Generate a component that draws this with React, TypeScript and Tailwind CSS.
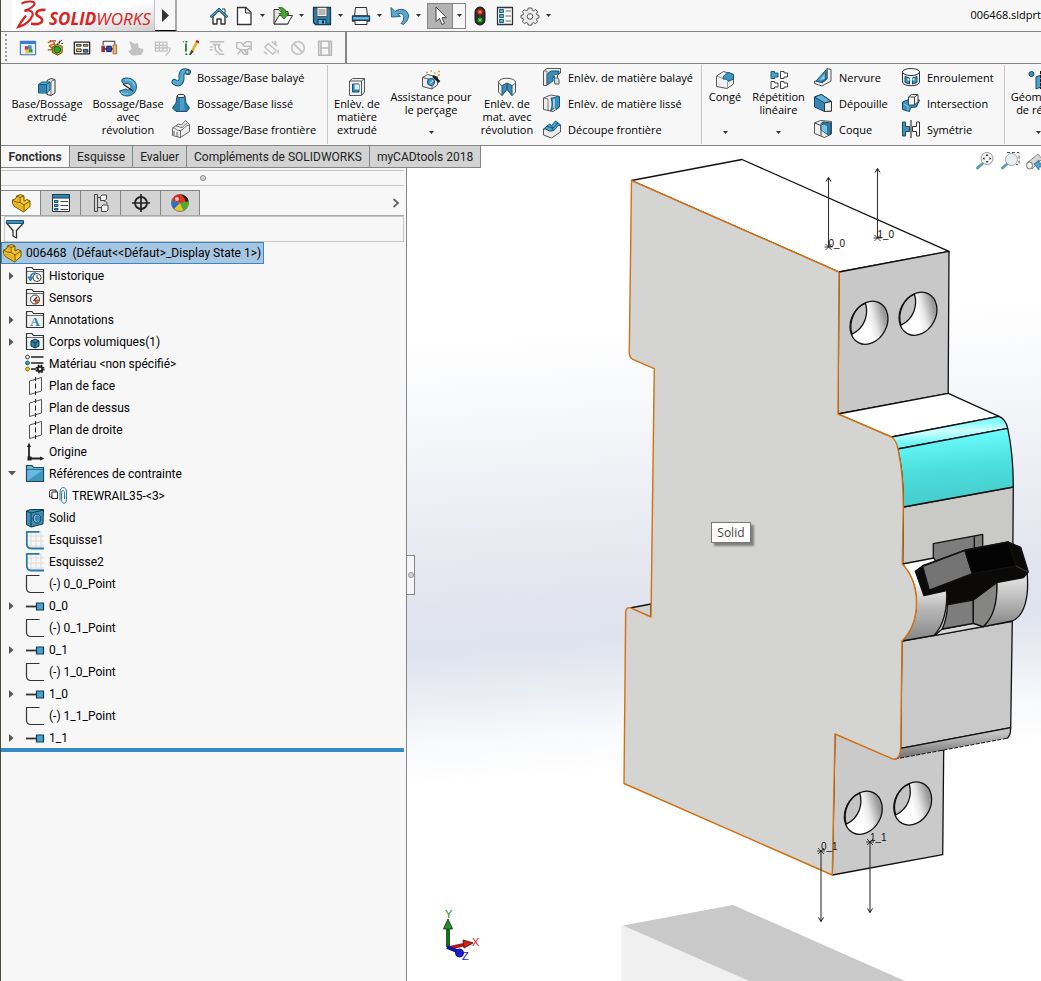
import type { ReactNode } from "react";

type IconProps = { size?: number; children: ReactNode };

function Svg({ size = 20, children }: IconProps) {
  return (
    <svg
      width={size}
      height={size}
      viewBox="0 0 20 20"
      fill="none"
      stroke="#333"
      strokeWidth="1"
      strokeLinejoin="round"
      className="shrink-0"
      aria-hidden="true"
    >
      {children}
    </svg>
  );
}

const icons = {
  home: (
    <Svg>
      <path d="M4 10v8h4v-5h4v5h4v-8L10 4z" fill="#fff" strokeWidth="1.4" />
      <path d="M13 3h3v5" fill="#fff" />
      <path d="M1 10.500 10 2l9 8.500-1.500 1L10 4.800 2.500 11.500z" fill="#4fa3cb" stroke="#14506f" />
    </Svg>
  ),
  page: (
    <Svg>
      <path d="M3.500 1.500h8.500l5 5v12H3.500z" fill="#fff" strokeWidth="1.300" />
      <path d="M11.500 2v5h5" fill="#e4e4e4" />
    </Svg>
  ),
  open: (
    <Svg>
      <path d="M1 3.500h5l1.500 2H15V18H1z" fill="#e3e3e3" />
      <path d="M1 18 6 9.500h13.500L14.500 18z" fill="#f7f7f7" />
      <path d="M5.500 1.500c5-.5 8 2 7.500 6h3l-5 5.500-5-5.500h3c0-2-1-4-3.500-6z" fill="#4aa52f" stroke="#1d6b12" strokeWidth=".8" />
    </Svg>
  ),
  save: (
    <Svg>
      <path d="M1.500 1.500h17v17H3.500l-2-2z" fill="#2f7ea6" stroke="#173a4f" strokeWidth="1.300" />
      <path d="M5 1.500h10v9H5z" fill="#f4f4f4" stroke="#555" />
      <path d="M6.500 4h7M6.500 6h7M6.500 8h7" stroke="#777" />
      <path d="M6 13.500h8v5H6z" fill="#5fb1d6" stroke="#173a4f" />
      <path d="M11 14.500v3" stroke="#102c3c" strokeWidth="2" />
    </Svg>
  ),
  print: (
    <Svg>
      <path d="M4.500 1.500h11L16.500 10h-13z" fill="#f4f4f4" />
      <path d="M1.500 10h17v5h-17z" fill="#2f8dbb" stroke="#173a4f" strokeWidth="1.300" />
      <path d="M2 12h16" stroke="#a8dcf2" />
      <path d="M4 14.500h12v4H4z" fill="#fff" />
    </Svg>
  ),
  undo: (
    <Svg>
      <path d="M1 1.500 1.500 11l9-.5-3-2.500c4-1.500 7 1 6 5-.3 1.500-1 3-2.500 4.500l2.500 1c3-2.500 5-5.500 5-8.500 0-6-7.500-9-13.500-4.500z" fill="#5ba7cf" stroke="#256587" />
    </Svg>
  ),
  cursor: (
    <Svg>
      <path d="M6 1v14.500l3.500-3 2.500 6 2.500-1.200-2.500-5.600h4.500z" fill="#fafafa" stroke="#444" />
    </Svg>
  ),
  lights: (
    <Svg>
      <rect x="5" y="1" width="10" height="18" rx="5" fill="#2c2c2c" stroke="#1b1b1b" />
      <circle cx="10" cy="6" r="3" fill="#e03a22" stroke="#8d1c0e" />
      <circle cx="10" cy="6" r="1" fill="#ff9e85" stroke="none" />
      <circle cx="10" cy="14" r="3" fill="#2b9a27" stroke="#115410" />
      <circle cx="10" cy="14" r="1" fill="#8fe384" stroke="none" />
    </Svg>
  ),
  options: (
    <Svg>
      <path d="M2.500 1.500h15v17h-15z" fill="#fdfdfd" strokeWidth="1.300" />
      <path d="M4.500 3.500h4v3h-4zM4.500 8.500h4v3h-4zM4.500 13.500h4v3h-4z" fill="#57b0da" stroke="#1b668c" />
      <path d="M10.500 5h5.500M10.500 10h5.500M10.500 15h5.500" stroke="#666" />
    </Svg>
  ),
  gear: (
    <Svg>
      <path
        d="M8.200 2h3.600l.5 2.200 1.300.6 2-1.200 2 2-1.200 2 .6 1.300 2 .5v2.400l-2 .6-.6 1.300 1.200 2-2 2-2-1.200-1.300.6-.5 2H8.200l-.5-2-1.300-.6-2 1.200-2-2 1.200-2-.6-1.300-2-.6V9.400l2-.5.6-1.300-1.200-2 2-2 2 1.200 1.300-.6z"
        fill="#ebebeb"
        stroke="#555"
      />
      <circle cx="10" cy="10.500" r="2.800" fill="#f7f7f7" stroke="#555" />
    </Svg>
  ),
  extrude: (
    <Svg>
      <path d="M10 3.500 14 1.500l4 1V16l-4 2.500-4-1z" fill="#f4f4f4" />
      <path d="M14 4.500 18 2.500M14 4.500v13.500" stroke="#666" />
      <path d="M1.500 7.500 5 5h8v8l-3.500 3h-8z" fill="#58acd4" stroke="#1a5675" />
      <path d="M1.500 7.500h8V16M9.500 7.500 13 5" stroke="#1a5675" />
      <path d="M2 8h7v7.500H2z" fill="#3287b2" stroke="none" />
    </Svg>
  ),
  revolve: (
    <Svg>
      <path d="M5 1.500c8-2 13.500 2.500 13.500 8 0 5.500-4.500 9.500-9.500 9.500-3.500 0-6.500-2-7.500-5l6.500-2c1.500 1.500 3.500 1 4.500-.5 1.500-2.500-.5-5-3.500-5-2.500.5-4.500 0-5-1.500-.4-1.500 0-3 1-3.500z" fill="#4ba1cb" stroke="#1a5675" />
      <path d="M7 3c5-1 9 1.500 9.500 6" stroke="#9ad5ef" />
      <path d="M3 15.500c2 1.500 4.500 2 7 1" stroke="#9ad5ef" />
      <path d="m5 7 10 7" stroke="#222" strokeWidth="1.300" />
    </Svg>
  ),
  sweep: (
    <Svg>
      <path d="M3.500 15c5 3.500 7.500-.5 7-5-.5-5 2-7 6.500-5" stroke="#1a5675" strokeWidth="6" strokeLinecap="round" />
      <path d="M3.500 15c5 3.500 7.500-.5 7-5-.5-5 2-7 6.500-5" stroke="#52a9d2" strokeWidth="4" strokeLinecap="round" />
      <circle cx="16.500" cy="5" r="1.800" fill="#8fd0ec" stroke="#1a5675" />
    </Svg>
  ),
  loft: (
    <Svg>
      <path d="M6 3h8l1 7 3.500 5-2.500 3.500H5L1.500 15 5 10z" fill="#2f7ea8" stroke="#1a5675" />
      <path d="M9 4v14l5-1-1-7V4z" fill="#4a9fc8" stroke="none" />
      <ellipse cx="10" cy="3" rx="4" ry="1.600" fill="#fff" />
    </Svg>
  ),
  boundary: (
    <Svg>
      <path d="m1.500 9 6-4 3 1 4-4.500 4 4v7l-9 6-8-2z" fill="#efefef" stroke="#666" />
      <path d="M1.500 9c3-1 3 3 8 2.500 4-1 4-5 9-5.500M9.500 11.500v7M5 7c3 0 4 2 6 1.500s3-4 5-4M3 12v4M6 13v4" stroke="#666" />
    </Svg>
  ),
  cutExtrude: (
    <Svg>
      <path d="m2.500 4 3-2.500h12V15l-3 3.500h-12z" fill="#f1f1f1" stroke="#555" />
      <path d="M2.500 4h12v14.500M14.500 4l3-2.500" stroke="#555" />
      <path d="M5.500 7h6.500v8H5.500z" fill="#2f86b1" stroke="#1a5675" />
      <path d="M7.500 7.500H12v5H7.500z" fill="#d9eff9" stroke="none" />
    </Svg>
  ),
  wizard: (
    <Svg>
      <path d="m1.500 7.500 5-3 10 2.500v8L11 19l-9.500-2.500z" fill="#ececec" stroke="#555" />
      <path d="M1.500 7.500 11 10v9M11 10l5.500-3" stroke="#555" />
      <circle cx="10" cy="12" r="3.600" fill="#429aca" stroke="#1a4f6b" />
      <path d="M9 13c2 0 2.500-1 2.500-3" stroke="#d2edf9" />
      <path d="m12 6 6.500 6" stroke="#1d1d1d" strokeWidth="2.400" />
      <path d="M5 2.500h2M9.500 1h1.500M13 3h1.500M17 1.500h2M17 5h2" stroke="#f0961e" strokeWidth="1.600" />
    </Svg>
  ),
  cutRevolve: (
    <Svg>
      <path d="M1.500 5v10l3.500 3.500 5-7 5 7 3.500-3.500V5z" fill="#ededed" stroke="#555" />
      <path d="M5 8.500 10 6l5 2.500v10l-5-6-5 6z" fill="#3790bd" stroke="#1a5675" />
      <path d="M10 6.500v6" stroke="#15445c" />
      <path d="M1.500 5c1-5 16-5 17 0-.5 2-2 3-3.500 3.500L10 6 5 8.500C3.500 8 2 7 1.500 5z" fill="#f8f8f8" stroke="#555" />
    </Svg>
  ),
  cutSweep: (
    <Svg>
      <path d="M1.500 4 5 1.500h13.500V6l-3 2v7h-3V9L5 18.500H1.500z" fill="#ededed" stroke="#555" />
      <path d="M5 18V9c0-3 3-5 6-5h6v3c-4 0-6 1-6 4v3z" fill="#378fbd" stroke="#1a5675" />
      <path d="M12 12c2-2 5-1 5 1v4h-4z" fill="#c9e6f3" stroke="#555" />
      <path d="M1.500 4h3.500v14" stroke="#777" />
    </Svg>
  ),
  cutLoft: (
    <Svg>
      <path d="m1.500 5 7-3 9 1.500V14l-6.500 4.500-9.500-2z" fill="#ededed" stroke="#555" />
      <path d="M1.500 5 6 6v11.500" stroke="#777" />
      <path d="M9 5c3 0 6-1 6-2l2.500 1v10l-3 2.500c-1-4-3 0-6 1.500 2-4 2-9 .5-13z" fill="#378fbd" stroke="#1a5675" />
      <path d="M12 6v9" stroke="#b7e0f2" strokeWidth="1.500" />
    </Svg>
  ),
  cutBoundary: (
    <Svg>
      <path d="M1.500 10v6l8 3 9-6V6z" fill="#ececec" stroke="#555" />
      <path d="m1.500 10 6-5 2 1.500 4-4.500 5 4c-4 0-4 5-8.500 6-4 1-5-3-8.500-2z" fill="#4aa3ce" stroke="#1a5675" />
      <path d="M5 7.500c3 0 4 2 6 1.500s2-3.500 5-5M9.500 6.500l2 5.500" stroke="#1a5675" />
    </Svg>
  ),
  fillet: (
    <Svg>
      <path d="m1.500 6 7-4.500 10 3V14L12 18.500l-10.500-2z" fill="#f0f0f0" stroke="#555" />
      <path d="M8 9c0-3 2-5 6-6.500l4.500 2V9L13 11.500c0-2-2-2.500-5-2.500z" fill="#3c96c3" stroke="#1a5675" />
      <path d="M1.500 6 8 8.500M12.500 12v6" stroke="#999" />
    </Svg>
  ),
  pattern: (
    <Svg>
      <path d="M2 1.500v7h3.500V7H9V3H5.500V1.500z" fill="#4aa3ce" stroke="#1a5675" />
      <path d="M11.500 1.500v7H15V7h3.500V3H15V1.500zM2 11.500v7h3.500V17H9v-4H5.500v-1.500zM11.500 11.500v7H15V17h3.500v-4H15v-1.500z" fill="#fff" stroke="#444" />
    </Svg>
  ),
  rib: (
    <Svg>
      <path d="m14 1.500 4 1V14l-9 5-7.500-2.500V14l8 1 4.500-3z" fill="#ededed" stroke="#555" />
      <path d="M14 1.500V12l-5 4" stroke="#555" />
      <path d="M3 14 13 3v9l-5 3.500z" fill="#3b94c1" stroke="#1a5675" />
      <path d="m6.500 13 5-6v5z" fill="#8ccbe8" stroke="none" />
    </Svg>
  ),
  draft: (
    <Svg>
      <path d="m1.500 4 7-2.500 10 7V18l-7 .5-10-4.500z" fill="#3586b0" stroke="#1a4a63" />
      <path d="m1.500 4 7-2.500 10 7-7 1.500z" fill="#63b4da" stroke="#1a4a63" />
      <path d="m11.500 10 7-1.500V18l-7 .5z" fill="#eee" />
    </Svg>
  ),
  shell: (
    <Svg>
      <path d="m1.500 4 6-2.500 11 1V15l-7 3.500-10-4z" fill="#f0f0f0" stroke="#555" />
      <path d="m8 4.500 2-1.500 8 1v10l-2.500 2-7.500-5z" fill="#2b7ca7" stroke="#1a4a63" />
      <path d="M8 4.500 14 7v7.500l-6-3.500z" fill="#7cc3e3" stroke="none" />
      <path d="m1.500 4 6.500 2.500v10.500M8 6.500l3-2" stroke="#444" />
    </Svg>
  ),
  wrap: (
    <Svg>
      <path d="M1.500 5v10c0 5 17 5 17 0V5z" fill="#f0f0f0" />
      <ellipse cx="10" cy="5" rx="8.500" ry="3.500" fill="#fafafa" />
      <path d="M4 9.500 8.500 11v6L4 15.500zM16 9.500 11.500 11v6l4.500-1.500z" fill="#3b94c1" stroke="#1a4a63" />
      <path d="M6.500 12.500h2M11.500 12.500h2" stroke="#e6f5fb" strokeWidth="2" />
    </Svg>
  ),
  intersect: (
    <Svg>
      <path d="M1.500 9 6 7h12.500l-3 7-6 .5-1 4-7-2z" fill="#3b94c1" stroke="#1a4a63" />
      <path d="m7.500 4 3-2.500h6.500v7L13.500 12h-6z" fill="#f4f4f4" stroke="#444" />
      <path d="M7.500 4h6v8M13.500 4 17 1.500" stroke="#444" />
      <path d="m3 11 4 2.500v4" stroke="#8ccbe8" />
    </Svg>
  ),
  mirror: (
    <Svg>
      <path d="M1.500 3h3v4.500h4v5h-4V17h-3z" fill="#3b94c1" stroke="#1a4a63" />
      <path d="M18.500 3h-3v4.500h-4v5h4V17h3z" fill="#fff" />
      <path d="M10 1v18" stroke="#111" />
    </Svg>
  ),
  refGeometry: (
    <Svg>
      <circle cx="3.500" cy="4" r="2.500" fill="#3b94c1" stroke="#1a4a63" />
      <path d="m8 7 9-3.500v12L8 19z" fill="#4aa3ce" stroke="#1a4a63" />
      <path d="M12.500 1v18" stroke="#111" strokeDasharray="3 1" />
    </Svg>
  ),
  part: (
    <Svg>
      <path d="M1.500 7 5 5.500 5.500 3l4-1.500L13 3v5l3-1.500 3 1.500v5.500L12.500 19l-9-5.500-2-3z" fill="#f4c632" stroke="#7a5600" />
      <path d="M5.500 3 9 4.500 13 3M9 4.500v5l4 2.500 6-4M13 12v6.500M1.500 7l3.500 2 4 .5" stroke="#7a5600" />
      <path d="m6 3.500 3 1.500v4L6 8zM2 8l10.500 5.500v4.500L4 13z" fill="#e0a612" stroke="none" opacity=".6" />
    </Svg>
  ),
  properties: (
    <Svg>
      <path d="M1.500 1.500h17v17h-17z" fill="#fafafa" />
      <path d="M1.500 1.500h17v3.500h-17z" fill="#2f86b1" stroke="#173f55" />
      <path d="M3.500 7.500h3.500v2H3.500zM3.500 11.500h3.500v2H3.500zM3.500 15.500h3.500v1.500H3.500z" fill="#4aa3ce" stroke="#1a5675" />
      <path d="M9.500 8.500H17M9.500 12.500H17M9.500 16.500H17" stroke="#444" />
    </Svg>
  ),
  configs: (
    <Svg>
      <path d="M3.500 1.500h3v17h-3zM6.500 4.500h5M6.500 14.500h5" stroke="#444" />
      <path d="M9.500 3.500 11 2h4.500v4L14 7.500H9.500z" fill="#f1f1f1" stroke="#444" />
      <path d="m10.500 13.500 1.500-1.500h5v5l-1.500 1.500h-5z" fill="#f1f1f1" stroke="#444" />
      <path d="M13 8c2 0 3 1 3 3" stroke="#444" />
    </Svg>
  ),
  target: (
    <Svg>
      <circle cx="10" cy="10" r="6" stroke="#222" strokeWidth="1.800" />
      <path d="M10 1v18M1 10h18" stroke="#222" strokeWidth="1.700" />
    </Svg>
  ),
  ball: (
    <Svg>
      <circle cx="10" cy="10" r="8.500" fill="#e9c720" stroke="#777" />
      <path d="M10 10 2 7.500C3.500 3 7 1.500 10 1.500z" fill="#d52b1e" stroke="none" />
      <path d="M10 10V1.500c4.500 0 8 3 8.500 7z" fill="#202020" stroke="none" />
      <path d="M10 1.500c3 1 5 4 6 7.500l-6 1z" fill="#e33425" stroke="none" />
      <path d="M11 2c3 1 5 4 5 7l2-1c0-3-3-6-7-6z" fill="#202020" stroke="none" />
      <path d="M10 10 2 7.500c-1 3 0 6.500 2 8.500z" fill="#2c6fc7" stroke="none" />
      <path d="m10 10 8.500-1.500c0 4-1.500 7.500-5 9.500z" fill="#4bab33" stroke="none" />
      <circle cx="7" cy="6" r="2" fill="#fff" opacity=".7" stroke="none" />
    </Svg>
  ),
  filter: (
    <Svg>
      <path d="M1.500 4 8 11.500V17l3.500 2v-7.500L18.500 4z" fill="#f8f8f8" strokeWidth="1.300" />
      <path d="M1.500 1.500h17v2.800h-17z" fill="#3c96c3" stroke="#1a5675" />
    </Svg>
  ),
};

function Folder({ children, fill = "#f1f1f1", stroke = "#333" }: { children?: ReactNode; fill?: string; stroke?: string }) {
  return (
    <Svg>
      <path d="M1.500 17.500v-16H7L8.500 3.500h10v14z" fill={fill} stroke={stroke} strokeWidth="1.200" />
      <path d="M1.500 5.500h17" stroke={stroke} strokeWidth=".7" />
      {children}
    </Svg>
  );
}

const plane = (
  <Svg>
    <path d="m4.500 5 12-3.500V15l-12 3.500z" stroke="#555" />
    <path d="M10.500 1v4M10.500 7.500v5M10.500 15v4" stroke="#222" />
  </Svg>
);

const sketch = (
  <Svg>
    <path d="M6 1v17M11 1v17M16 1v17M2 6h17M2 11h17M2 16h17" stroke="#dcdcdc" />
    <path d="M14.500 1.800H1.800V14c0 3 2 4.500 4.500 4.500H19" stroke="#2a7ba6" strokeWidth="1.800" />
  </Svg>
);

const sketchPoint = (
  <Svg>
    <path d="M14.500 1.500h-13V14c0 3 2 4.500 4.500 4.500H19" strokeWidth="1.200" />
  </Svg>
);

const mateAxis = (
  <Svg>
    <path d="M1 10.500h11" strokeWidth="1.800" />
    <path d="M11.500 7h7v7h-7z" fill="#4aa3ce" stroke="#123a4e" strokeWidth="1.200" />
  </Svg>
);

type TreeItem = { label: string; icon: ReactNode; state?: "closed" | "open"; child?: boolean };

const tree: TreeItem[] = [
  {
    label: "Historique",
    state: "closed",
    icon: (
      <Folder>
        <circle cx="12" cy="11.500" r="4" fill="#fff" stroke="#444" />
        <path d="M12 9v3l2 1" />
        <path d="M3 11h5l-2.500 4z" fill="#3c96c3" stroke="#2a7ba6" />
        <path d="M5.500 11c.5-3 3-4 5.500-4" stroke="#2a7ba6" strokeWidth="1.400" />
      </Folder>
    ),
  },
  {
    label: "Sensors",
    icon: (
      <Folder>
        <circle cx="10" cy="11.500" r="4.500" fill="#fff" stroke="#333" />
        <path d="M10 11.500h4c0 2.500-1.500 4-4 4z" fill="#e2491f" stroke="none" />
        <path d="m8.500 13 3.500-4" strokeWidth="1.400" />
      </Folder>
    ),
  },
  {
    label: "Annotations",
    state: "closed",
    icon: (
      <Folder>
        <text x="10" y="16" textAnchor="middle" fontSize="13" fontWeight="700" fontFamily="Liberation Serif, serif" fill="#2a7ba6" stroke="none">
          A
        </text>
      </Folder>
    ),
  },
  {
    label: "Corps volumiques(1)",
    state: "closed",
    icon: (
      <Folder>
        <path d="m6 9 4-2 4 2v5l-4 2-4-2z" fill="#2f86b1" stroke="#123a4e" />
        <path d="m6 9 4 2 4-2M10 11v5" stroke="#123a4e" />
      </Folder>
    ),
  },
  {
    label: "Matériau <non spécifié>",
    icon: (
      <Svg>
        <path d="M6 3h12.500M6 9h12.500M6 15h5" stroke="#222" strokeWidth="1.700" />
        <circle cx="2.500" cy="3" r="1.900" fill="#fff" />
        <circle cx="2.500" cy="9" r="1.900" fill="#4aa3ce" stroke="#1a5675" />
        <circle cx="2.500" cy="15" r="1.900" fill="#f4c632" stroke="#8a6500" />
        <circle cx="15" cy="15" r="2.400" stroke="#222" strokeWidth="2.200" />
        <circle cx="15" cy="15" r="4" stroke="#222" strokeWidth="1.200" strokeDasharray="1.600 1.600" />
      </Svg>
    ),
  },
  { label: "Plan de face", icon: plane },
  { label: "Plan de dessus", icon: plane },
  { label: "Plan de droite", icon: plane },
  {
    label: "Origine",
    icon: (
      <Svg>
        <path d="M4 3v13.500h13" stroke="#222" strokeWidth="1.800" />
        <path d="m4 .5 2 4.500H2zM19.500 16.500 15 14.500v4z" fill="#222" stroke="none" />
        <path d="M2.500 14.500h4v4h-4z" fill="#222" stroke="none" />
      </Svg>
    ),
  },
  {
    label: "Références de contrainte",
    state: "open",
    icon: (
      <Folder fill="#66b9de" stroke="#1a4a63">
        <path d="M2 17 18 6v11z" fill="#4094be" stroke="none" />
      </Folder>
    ),
  },
  {
    label: "TREWRAIL35-<3>",
    child: true,
    icon: (
      <Svg>
        <path d="M1.500 5.500 3 4h5v2h1.500v6.500H4v-1.500H1.500z" fill="#eee" />
        <path d="M4 6h5.500v6.500H4z" fill="#fff" />
        <path d="M12 6c0-6 6.500-6 6.500 0v7.500c0 5-5 5-5 0V6.500c0-2.500 3-2.500 3 0V13" stroke="#2a7ba6" />
        <path d="M12 6v8.500" stroke="#2a7ba6" />
      </Svg>
    ),
  },
  {
    label: "Solid",
    icon: (
      <Svg>
        <path d="m1.500 3 4-1.500h13L18 16l-12 3-4.500-2.500z" fill="#3c8fb9" stroke="#123a4e" />
        <path d="M6 5v14M1.500 3 6 5l12.500-3" stroke="#123a4e" />
        <ellipse cx="12" cy="10.500" rx="3.800" ry="4.500" fill="#7fbfdd" stroke="#123a4e" />
        <ellipse cx="12.500" cy="10.500" rx="2.500" ry="3.300" fill="#3a84aa" stroke="none" />
      </Svg>
    ),
  },
  { label: "Esquisse1", icon: sketch },
  { label: "Esquisse2", icon: sketch },
  { label: "(-) 0_0_Point", icon: sketchPoint },
  { label: "0_0", icon: mateAxis, state: "closed" },
  { label: "(-) 0_1_Point", icon: sketchPoint },
  { label: "0_1", icon: mateAxis, state: "closed" },
  { label: "(-) 1_0_Point", icon: sketchPoint },
  { label: "1_0", icon: mateAxis, state: "closed" },
  { label: "(-) 1_1_Point", icon: sketchPoint },
  { label: "1_1", icon: mateAxis, state: "closed" },
];

function Caret() {
  return (
    <svg width="5" height="3" viewBox="0 0 5 3" aria-hidden="true">
      <path d="M0 0h5L2.500 3z" fill="#333" />
    </svg>
  );
}

function SplitTool({ icon, label }: { icon: ReactNode; label: string }) {
  return (
    <div className="flex items-center">
      <button aria-label={label}>{icon}</button>
      <button aria-label={`${label} menu`} className="flex h-5 w-[17px] items-center justify-center">
        <Caret />
      </button>
    </div>
  );
}

function Logo() {
  return (
    <div className="flex h-full w-[143px] shrink-0 items-start border-r border-[#c4c4c4] bg-linear-to-br from-white from-50% to-[#cfcfcf] pl-1">
      <svg width="33" height="30" viewBox="0 0 33 30" fill="none" stroke="#d9231f" aria-hidden="true">
        <path d="M5.500 3.500C10 1.200 18 .8 18.500 3.200c.5 2.500-4.500 5.800-10 7.600" strokeWidth="2" />
        <path d="M8.500 10.800c5.500-1 9 .4 8 4.400C15 20.500 8.500 25.500 2 27.200c2.500-5 5-8 8-11.700" strokeWidth="2.200" />
        <path d="M29.500 10c-4.500-1-9 .8-9.200 3.600-.2 3 6.400 3.400 5.900 6.800-.4 3-5 4.200-11.200 3.400" strokeWidth="2.600" />
      </svg>
      <span className="flex pt-2 text-[17px] leading-[22px] text-[#d9231f] italic">
        <b>SOLID</b>
        <span>WORKS</span>
      </span>
    </div>
  );
}

function TitleBar() {
  return (
    <header className="flex h-8 items-stretch border-b border-[#858585]">
      <div className="w-[11px] shrink-0" />
      <Logo />
      <button aria-label="Menu" className="flex w-[22px] items-center justify-center border-r-2 border-b border-r-[#aaa] border-b-black">
        <svg width="7" height="13" viewBox="0 0 7 13" aria-hidden="true">
          <path d="M0 0l7 6.500L0 13z" fill="#333" />
        </svg>
      </button>
      <div className="ml-8 flex flex-1 items-center">
        <button aria-label="Accueil" className="mr-[5px]">
          {icons.home}
        </button>
        <div className="flex gap-0.5">
          <SplitTool icon={icons.page} label="Nouveau" />
          <SplitTool icon={icons.open} label="Ouvrir" />
          <SplitTool icon={icons.save} label="Enregistrer" />
          <SplitTool icon={icons.print} label="Imprimer" />
          <SplitTool icon={icons.undo} label="Annuler" />
        </div>
        <div className="flex h-[26px] border border-[#858585]">
          <button aria-label="Sélectionner" className="flex w-[25px] items-center justify-center border-r border-[#858585] bg-[#b3b3b3]">
            {icons.cursor}
          </button>
          <button aria-label="Sélectionner menu" className="flex w-3 items-center justify-center">
            <Caret />
          </button>
        </div>
        <div className="ml-1 flex items-center gap-[5px]">
          <button aria-label="Reconstruire">{icons.lights}</button>
          <button aria-label="Propriétés du fichier">{icons.options}</button>
          <SplitTool icon={icons.gear} label="Options" />
        </div>
      </div>
      <h1 className="self-center text-[11px]">006468.sldprt</h1>
    </header>
  );
}

const macroTools: { label: string; art: ReactNode }[] = [
  {
    label: "Image",
    art: (
      <>
        <path d="M1.500 2.500h17v15h-17z" fill="#e3f1fb" stroke="#2456a8" />
        <path d="M1.500 2.500h17v3h-17z" fill="#3a78d8" stroke="none" />
        <path d="M6.500 8h4v4h-4z" fill="#d33a2a" stroke="none" />
        <path d="M10 7h4v4h-4z" fill="#3f87e0" stroke="none" />
        <path d="M7 12h4v4H7z" fill="#f2c32b" stroke="none" />
        <path d="M11 11h4v4h-4z" fill="#2f9b3c" stroke="none" />
      </>
    ),
  },
  {
    label: "Nouvelle macro",
    art: (
      <>
        <path d="m2 4 6-2 2 5M3 8l7-3M2 12h6l-4-5" stroke="#c26a1a" strokeWidth="1.600" />
        <path d="m7 9 5-3 6 2v7l-5 3-6-3z" fill="#e8b923" stroke="#5a4200" />
        <path d="m9 9 4-1 3 2v4l-4 2-3-2z" fill="#34a32e" stroke="#0d4b0a" />
        <path d="M12 6 18 1M15 2v3M17 5h2" stroke="#222" />
        <path d="M4 2h2M9 2h2" stroke="#e33" strokeWidth="1.600" />
      </>
    ),
  },
  {
    label: "Tableau",
    art: (
      <>
        <path d="M1.500 3.500h17v13h-17z" fill="#fff" stroke="#222" strokeWidth="1.400" />
        <path d="M4 6h5v2H4zM4 11h5v3H4zM11.500 6h5v2h-5z" fill="#f0d25a" stroke="#222" />
        <path d="M11.500 11.500h5v3h-5z" fill="#3d8be0" stroke="#222" />
      </>
    ),
  },
  {
    label: "Liaison",
    art: (
      <>
        <path d="M3.500 7V2.500h13V6" stroke="#222" />
        <path d="M1.500 7.500h4v7h-4z" fill="#a22a3c" stroke="none" />
        <path d="M5 11h10" stroke="#222" strokeWidth="1.500" />
        <path d="M7.500 8h5v6h-5z" fill="#2b4fc4" stroke="#113" />
        <path d="M14.500 6.500h4v10h-4z" fill="#f2b56a" stroke="#a5682a" />
      </>
    ),
  },
  {
    label: "Coupe",
    art: <path d="m3 3 6 3 3-1v5l6 2-2 5-10 1-4-4 4-3z" fill="#c3c3c3" stroke="#bbb" />,
  },
  {
    label: "Grille",
    art: <path d="M1.500 3.500h13v10h-13zM1.500 7h13M1.500 10h13M6 3.500v10M10 3.500v10M12 9l6 1-1 4-4 4" stroke="#c3c3c3" strokeWidth="1.400" />,
  },
  {
    label: "Crayon",
    art: (
      <>
        <path d="M2 3h1M5 3h2M5.500 5v9M5 17h2M9 17h2" stroke="#17721d" strokeWidth="1.800" />
        <path d="m18 3-6 11" stroke="#e3b51f" strokeWidth="3" />
        <path d="m17 2 3 2" stroke="#c2202f" strokeWidth="2.500" />
        <path d="m10.500 17 1-4 2 1z" fill="#222" />
      </>
    ),
  },
  {
    label: "Chanfrein",
    art: <path d="M2 3h16M5 6h9M8 6v6l5 5h5M12 6v4l4 4M2 9h3M2 12h3M9 17v1" stroke="#bdbdbd" strokeWidth="1.700" />,
  },
  {
    label: "Mains",
    art: <path d="M1 4h6l3 4h8M18 3h-5L9 6M2 5v5l5 2h6l4-2M6 12l4 5h4l-4-5M14 17v-5M3 17l3-4M18 3v10" stroke="#bdbdbd" strokeWidth="1.600" />,
  },
  {
    label: "Cotes",
    art: <path d="m3 9 9 8M7 5l9 8M3 9l4-4M12 17l4-4M11 3l6 5M2 14l4 3M14 2l2 3M18 12v4" stroke="#c3c3c3" strokeWidth="1.700" />,
  },
  {
    label: "Interdit",
    art: (
      <>
        <circle cx="10" cy="10" r="7" stroke="#c6c6c6" strokeWidth="2" />
        <path d="m5 5 10 10" stroke="#c6c6c6" strokeWidth="2" />
      </>
    ),
  },
  {
    label: "Film",
    art: <path d="M3 2.500h14v15.500H3zM5.500 10h9M5.500 2.500v15M14.500 2.500v15" stroke="#b8b8b8" strokeWidth="1.800" />,
  },
];

function MacroBar() {
  return (
    <div className="flex h-8 border-b border-[#858585]">
      <div className="flex h-[31px] items-center border-r-2 border-[#858585] pr-[7px]">
        <div className="mr-[7px] ml-1 h-[27px] w-0 border-l-2 border-dotted border-[#999]" />
        {macroTools.map((tool) => (
          <button key={tool.label} aria-label={tool.label} className="flex w-[27px] justify-center">
            <Svg size={18}>{tool.art}</Svg>
          </button>
        ))}
      </div>
    </div>
  );
}

type BigProps = { icon: ReactNode; lines: string[]; width: string; menu?: boolean };

function BigButton({ icon, lines, width, menu }: BigProps) {
  return (
    <button className={`flex shrink-0 flex-col items-center ${menu ? "pt-1.5" : "pt-[13px]"} ${width}`}>
      {icon}
      {lines.map((line) => (
        <span key={line} className="whitespace-nowrap">
          {line}
        </span>
      ))}
      {menu && (
        <span className="mt-auto pb-[11px]">
          <Caret />
        </span>
      )}
    </button>
  );
}

function SmallColumn({ items, width }: { items: [ReactNode, string][]; width: string }) {
  return (
    <div className={`flex shrink-0 flex-col pl-1 ${width}`}>
      {items.map(([icon, label]) => (
        <button key={label} className="flex h-[26px] items-center gap-1.5 whitespace-nowrap">
          {icon}
          {label}
        </button>
      ))}
    </div>
  );
}

function Divider() {
  return <div className="my-px w-px shrink-0 bg-[#c6c6c6]" />;
}

function Ribbon() {
  return (
    <div className="flex h-[82px] overflow-hidden border-b border-[#858585] pl-1 text-[11px] leading-[13px]">
      <BigButton icon={icons.extrude} lines={["Base/Bossage", "extrudé"]} width="w-[84px]" />
      <BigButton icon={icons.revolve} lines={["Bossage/Base", "avec", "révolution"]} width="w-[78px]" />
      <SmallColumn
        width="w-[160px]"
        items={[
          [icons.sweep, "Bossage/Base balayé"],
          [icons.loft, "Bossage/Base lissé"],
          [icons.boundary, "Bossage/Base frontière"],
        ]}
      />
      <Divider />
      <BigButton icon={icons.cutExtrude} lines={["Enlèv. de", "matière", "extrudé"]} width="w-[58px]" />
      <BigButton icon={icons.wizard} lines={["Assistance pour", "le perçage"]} width="w-[90px]" menu />
      <BigButton icon={icons.cutRevolve} lines={["Enlèv. de", "mat. avec", "révolution"]} width="w-[62px]" />
      <SmallColumn
        width="w-[163px]"
        items={[
          [icons.cutSweep, "Enlèv. de matière balayé"],
          [icons.cutLoft, "Enlèv. de matière lissé"],
          [icons.cutBoundary, "Découpe frontière"],
        ]}
      />
      <Divider />
      <BigButton icon={icons.fillet} lines={["Congé"]} width="w-[46px]" menu />
      <BigButton icon={icons.pattern} lines={["Répétition", "linéaire"]} width="w-[61px]" menu />
      <SmallColumn
        width="w-[88px]"
        items={[
          [icons.rib, "Nervure"],
          [icons.draft, "Dépouille"],
          [icons.shell, "Coque"],
        ]}
      />
      <SmallColumn
        width="w-[107px]"
        items={[
          [icons.wrap, "Enroulement"],
          [icons.intersect, "Intersection"],
          [icons.mirror, "Symétrie"],
        ]}
      />
      <Divider />
      <BigButton icon={icons.refGeometry} lines={["Géométrie", "de référ."]} width="w-[66px]" menu />
    </div>
  );
}

const tabs = ["Esquisse", "Evaluer", "Compléments de SOLIDWORKS", "myCADtools 2018"];

function CommandTabs() {
  return (
    <nav className="z-10 col-start-1 row-start-1 flex w-max font-['Roboto',sans-serif] text-[12px]">
      <button className="w-[68px] border-b border-[#858585] font-bold whitespace-nowrap text-[#333]">Fonctions</button>
      {tabs.map((tab, i) => (
        <button
          key={tab}
          className={`border-b border-l border-[#858585] bg-[#d3d3d3] px-[7px] whitespace-nowrap text-[#222] ${i === tabs.length - 1 ? "border-r" : ""}`}
        >
          {tab}
        </button>
      ))}
    </nav>
  );
}

function FeatureTree() {
  const views: [string, ReactNode][] = [
    ["PropertyManager", icons.properties],
    ["ConfigurationManager", icons.configs],
    ["DimXpertManager", icons.target],
    ["DisplayManager", icons.ball],
  ];
  return (
    <aside className="col-start-1 row-start-2 border-r border-[#858585] bg-[#f7f7f7] pt-0.5 pr-0.5">
      <div className="flex h-4 items-center justify-center border-y border-[#c6c6c6]">
        <span className="size-1.5 rounded-full border border-[#888] bg-[#d5d5d5]" />
      </div>
      <div className="mt-1 flex h-[26px] border-b border-[#a8a8a8]">
        <button aria-label="FeatureManager" className="flex w-[39px] items-center justify-center border-t border-[#858585]">
          {icons.part}
        </button>
        {views.map(([label, icon], i) => (
          <button
            key={label}
            aria-label={label}
            className={`flex w-10 items-center justify-center border-t border-l border-[#858585] bg-[#d3d3d3] ${i === 3 ? "border-r" : ""}`}
          >
            {icon}
          </button>
        ))}
        <button aria-label="Suite" className="ml-auto pr-1">
          <svg width="8" height="10" viewBox="0 0 8 10" fill="none" aria-hidden="true">
            <path d="M1.500 1 6 5 1.500 9" stroke="#666" strokeWidth="1.800" />
          </svg>
        </button>
      </div>
      <label className="ml-[3px] flex h-[26px] items-center border border-[#c6c6c6]">
        {icons.filter}
        <input aria-label="Filtrer l'arbre" className="ml-1 min-w-0 flex-1 bg-transparent text-[12px] outline-none" />
      </label>
      <ul className="border-b-4 border-[#368bc4] font-['Roboto',sans-serif] text-[12px]">
        <li className="flex h-[22px]">
          <button className="flex items-center gap-1 border border-[#3a86bd] bg-[#a6c6e1] pr-0.5 whitespace-pre">
            {icons.part}
            {"006468  (Défaut<<Défaut>_Display State 1>)"}
          </button>
        </li>
        {tree.map((item) => (
          <li key={item.label} className={`flex h-[22px] items-center pt-px ${item.child ? "pl-[23px]" : ""}`}>
            <span className="flex w-6 shrink-0 pl-2">
              {item.state === "closed" && (
                <svg width="5" height="8" viewBox="0 0 5 8" aria-hidden="true">
                  <path d="M0 0l4.500 4L0 8z" fill="#555" />
                </svg>
              )}
              {item.state === "open" && (
                <svg width="8" height="5" viewBox="0 0 8 5" className="-ml-px" aria-hidden="true">
                  <path d="M0 0h8L4 4.500z" fill="#555" />
                </svg>
              )}
            </span>
            <button className="flex items-center gap-1 whitespace-nowrap">
              {item.icon}
              {item.label}
            </button>
          </li>
        ))}
      </ul>
    </aside>
  );
}

function Hole({ x, y }: { x: number; y: number }) {
  return (
    <g transform={`translate(${x} ${y})`} strokeWidth="1.300">
      <ellipse rx="22.500" ry="17.800" transform="rotate(-62)" fill="url(#bore)" stroke="none" />
      <path d="M-3.500-19.500c3 11 0 24-13.500 31C-21-1-14.500-15-3.500-19.500z" fill="#c4c4c4" />
      <ellipse rx="22.500" ry="17.800" transform="rotate(-62)" />
    </g>
  );
}

type MarkerProps = { x: number; y: number; tip: number; label: string; labelY: number };

function Marker({ x, y, tip, label, labelY }: MarkerProps) {
  const back = tip < y ? tip + 4 : tip - 4;
  return (
    <g strokeWidth="1">
      <path d={`M${x} ${y}V${tip}`} stroke="#333" strokeWidth="1.100" />
      <path d={`M${x - 2.500} ${back}L${x} ${tip}L${x + 2.500} ${back}`} />
      <path d={`M${x - 4} ${y}h8M${x - 3} ${y - 3}l6 6M${x + 3} ${y - 3}l-6 6`} strokeWidth=".8" />
      <text x={x} y={labelY} fontSize="10" fontFamily="Liberation Sans, sans-serif" fill="#111" stroke="none">
        {label}
      </text>
    </g>
  );
}

function Model() {
  return (
    <svg viewBox="407 146 634 835" className="block h-full w-full" fill="none" stroke="#111" strokeWidth="1.300" strokeLinejoin="round" role="img" aria-label="006468">
      <defs>
        <linearGradient id="bore" x1="1" y1=".7" x2=".3" y2=".1">
          <stop offset=".1" stopColor="#999" />
          <stop offset=".4" stopColor="#e8e8e8" />
          <stop offset=".6" stopColor="#fff" />
        </linearGradient>
        <linearGradient id="cyan" x1="0" y1="0" x2=".12" y2="1">
          <stop offset=".1" stopColor="#6bfdfd" />
          <stop offset=".55" stopColor="#4ddede" />
          <stop offset="1" stopColor="#46cbcb" />
        </linearGradient>
        <linearGradient id="cyanTop" x1="0" y1="0" x2=".1" y2="1">
          <stop offset=".25" stopColor="#84fbfb" />
          <stop offset=".5" stopColor="#cfffff" />
          <stop offset=".85" stopColor="#6cf6f8" />
        </linearGradient>
        <linearGradient id="drum" x1="0" y1="0" x2="0" y2="1">
          <stop offset=".25" stopColor="#fff" />
          <stop offset=".6" stopColor="#b9b9b9" />
          <stop offset="1" stopColor="#858585" />
        </linearGradient>
        <linearGradient id="drumRight" x1="0" y1="0" x2="0" y2="1">
          <stop offset="0" stopColor="#e9e9e9" />
          <stop offset=".5" stopColor="#b9b9b9" />
          <stop offset="1" stopColor="#858585" />
        </linearGradient>
        <linearGradient id="roll" x1="0" y1="0" x2=".15" y2="1">
          <stop offset=".3" stopColor="#c4c4c4" />
          <stop offset=".9" stopColor="#777" />
        </linearGradient>
      </defs>

      {/* ground shadow */}
      <g stroke="none">
        <path d="M621.500 925.500h2L749 981H621.500z" fill="#f0f0f0" />
        <path d="M623 925.500 733 905 905 981H749z" fill="#c9c9c9" />
      </g>

      {/* housing */}
      <path d="M631.500 180.500 742 159.500 949 251.300 839 272z" fill="#fff" />
      <path d="m839 272 110-20.700-.8 142L838 414z" fill="#c8c8c8" />
      <path d="m838 414 110.200-20.700L999 416.300 891.500 437z" fill="#fff" />
      <path d="m835 734 108.700 16.700-1 104L832.300 875z" fill="#cacaca" />
      <path d="m903.300 507 110-20-1 134.300L902 641z" fill="#c9c9c8" />
      <path d="m902 641 110.300-19.700-1.600 106.400-110 20.600z" fill="#c9c9c9" />
      <path d="m900.700 748.300 110-20.600c0 5.300-1.500 9.500-4 10.600l-113 21z" fill="url(#roll)" stroke="none" />
      <path d="m900.700 748.300 110-20.600c0 5.300-1.500 9.500-4 10.600" />
      <path d="m1006.700 738.300-113 21" strokeDasharray="4 1.500" strokeWidth="1" />
      <path d="M891.500 437 999 416.300c5 2 7.500 6 8.700 12L897.700 449z" fill="url(#cyanTop)" />
      <path d="m897.700 449 110-20.700c4 18 5.600 38 5.600 58.700l-110 20c.3-22-1.500-42-5.600-58z" fill="url(#cyan)" />
      <path d="m630 608 21-4v13z" fill="#d0d0d0" />

      {/* switch recess */}
      <path d="m933.300 543.700 49.400-9.400v30l-49.400 8z" fill="#7d7d7d" />
      <path d="M974.300 536v20" />
      <path d="M902.300 564 934 558l12.500 30c1.500 20-3 38-12.500 47.500L902 641c18-20 20-54 .3-77z" fill="url(#drum)" />
      <path d="m996.700 582 30.500-8c2 24-3 42-15 47l-29 5.700c11-12 14-27 13.500-44.700z" fill="url(#drumRight)" />
      <path d="m942.300 629 31-5.700 10 3.400-49 9z" fill="#d9d9d9" />
      <path d="m947.500 604 25.800-5v24.300l-31 5.700c3-7 5-16 5.200-25z" fill="#7d7d7d" />
      <path d="m973.300 600 23.400-18c1 19-3 35-13.400 44.700l-10-3.400z" fill="#858583" />

      {/* lever */}
      <path d="m915.300 571.300 7.400-5.600L965 550l43.300-8 12.400 5.300 7.600 24.700-5 5.700-26.600 5-23.400 17.300-25.300 4.700-1.300-14-22.700 5z" fill="#0b0a09" />
      <path d="m922.700 566.500 42.300-16 7.300 23.200-43 16.300z" fill="#747474" />
      <path d="m965 550.500 43.300-8.500 7.700 24-43.700 7.700z" fill="#030303" />
      <path d="m1016 566 12.300 6" stroke="#333" />

      <Hole x={869} y={322.700} />
      <Hole x={918} y={313.700} />
      <Hole x={863.300} y={812.700} />
      <Hole x={912.700} y={803.500} />

      {/* selected face */}
      <path
        d="M631.500 180.500 839 272l-1 142 53.500 23c4 2.500 5.500 7 6.500 12 4 18 5.300 38 5.300 58l-1 57c19 20 19 58-.3 77l-1.300 107c-.2 8-2.500 11-7 11.300L835 734l-2.700 141L624 783.500l1.700-171c.2-4 1.800-5.200 4.300-4.800l21 9.300 3.300-248.300-21.500-9.400c-2.500-1.200-3.500-3.500-3.500-7.300z"
        fill="#d4d4d2"
        stroke="#d3700f"
        strokeWidth="1.400"
      />

      <Marker x={828.500} y={247} tip={177.500} label="0_0" labelY={247} />
      <Marker x={877.500} y={238} tip={168.500} label="1_0" labelY={238} />
      <Marker x={821} y={851} tip={921.500} label="0_1" labelY={850} />
      <Marker x={870} y={842} tip={912.500} label="1_1" labelY={841} />

      {/* triad */}
      <g strokeWidth="1">
        <path d="M448 947V927" stroke="#1b6b1d" strokeWidth="4" />
        <path d="m448 919 4.500 10h-9z" fill="#2b8a2d" stroke="#145016" />
        <path d="m449 948 18-4" stroke="#b01818" strokeWidth="3.500" />
        <path d="m473 943-9 5-1-8z" fill="#c22" stroke="#701010" />
        <path d="m447 947 10 4" stroke="#1414a8" strokeWidth="4" />
        <circle cx="459.500" cy="953" r="4" fill="#1c1cd0" stroke="#10107c" />
        <g fontSize="11" fontFamily="Liberation Sans, sans-serif" stroke="none">
          <text x="445" y="918" fill="#1b8a1d">Y</text>
          <text x="472" y="946" fill="#e01414">X</text>
          <text x="462" y="960" fill="#1414d8">Z</text>
        </g>
      </g>
    </svg>
  );
}

function Magnifier({ children }: { children?: ReactNode }) {
  return (
    <Svg>
      <path d="m2.500 17 5-4.500" stroke="#5f9dc0" strokeWidth="3" strokeLinecap="round" />
      {children}
    </Svg>
  );
}

function Viewport() {
  return (
    <main className="relative col-start-2 row-span-2 row-start-1 min-w-0 overflow-hidden bg-[linear-gradient(176deg,#fff_0%,#fff_22%,#f8f9fb_30%,#eceef4_42%,#e1e4ee_53%,#dfe3ee_58%,#ebedf4_63%,#f8f9fb_68%,#fff_73%)]">
      <Model />
      <div className="absolute top-[5px] -right-1 flex gap-[5px]">
        <button aria-label="Zoom au mieux">
          <Magnifier>
            <circle cx="12" cy="7.500" r="6" fill="#f4f4f4" stroke="#999" />
            <path d="m12 3 1.500 2h-3zM12 12l1.500-2h-3zM7.500 7.500l2-1.500v3zM16.500 7.500l-2-1.500v3z" fill="#333" stroke="none" />
          </Magnifier>
        </button>
        <button aria-label="Zoom fenêtre">
          <Magnifier>
            <path d="M7 1.500h12v12h-3" stroke="#555" strokeDasharray="3 2" />
            <circle cx="11.500" cy="8.500" r="6" fill="#e6eef2" stroke="#aaa" />
          </Magnifier>
        </button>
        <button aria-label="Vue précédente">
          <Svg>
            <path d="m2 12 11-9 4 5-10 10z" fill="#d7d7d7" stroke="#888" />
            <ellipse cx="4.500" cy="14.500" rx="3" ry="3.500" fill="#f4f4f4" stroke="#777" />
            <path d="m9 13 5-4v3h5v4h-5v3z" fill="#4aa3ce" stroke="#1a5675" strokeWidth=".6" />
          </Svg>
        </button>
      </div>
      <button aria-label="Réduire le panneau" className="absolute top-[49%] left-0 flex h-10 w-2 items-center justify-center border border-l-0 border-[#858585] bg-[#f7f7f7]">
        <span className="size-1.5 rounded-full border border-[#999] bg-[#d5d5d5]" />
      </button>
      <div role="tooltip" className="absolute top-[45%] left-[48%] border border-[#767676] bg-white px-[5px] text-[12px] leading-[19px] text-[#444] shadow-[3px_3px_2px_rgba(0,0,0,0.4)]">
        Solid
      </div>
    </main>
  );
}

export default function App() {
  return (
    <div className="flex min-h-screen flex-col overflow-hidden border-l border-[#4a4a3c] bg-[#f7f7f7] font-['Open_Sans',sans-serif] text-black">
      <TitleBar />
      <MacroBar />
      <Ribbon />
      <div className="grid flex-1 grid-cols-[406px_minmax(0,1fr)] grid-rows-[22px_1fr]">
        <CommandTabs />
        <FeatureTree />
        <Viewport />
      </div>
    </div>
  );
}
